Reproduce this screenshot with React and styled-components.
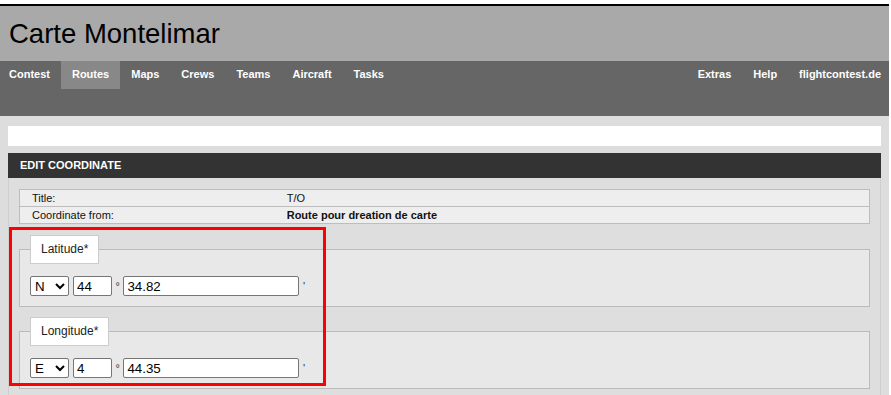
import styled, { createGlobalStyle } from 'styled-components';

const GlobalStyle = createGlobalStyle`
  body {
    margin: 0;
    background: #fff;
    font-family: 'Liberation Sans', Arial, sans-serif;
  }
`;

const Page = styled.div`
  position: relative;
  width: 889px;
  min-height: 389px;
  margin-top: 4px;
  border-top: 2px solid #000;
  background: #dddddd;
`;

const Banner = styled.header`
  box-sizing: border-box;
  height: 55px;
  padding: 12px 9px 0;
  background: #a9a9a9;
`;

const Title = styled.h1`
  margin: 0;
  font-size: 27.5px;
  font-weight: normal;
  line-height: 31px;
  color: #000;
`;

const Nav = styled.nav`
  display: flex;
  justify-content: space-between;
  align-items: flex-start;
  height: 55px;
  background: #666666;
`;

const NavGroup = styled.div`
  display: flex;
  margin-left: ${(p) => (p.$right ? 0 : '-2px')};
  margin-right: ${(p) => (p.$right ? '-3px' : 0)};
`;

const NavItem = styled.a`
  display: block;
  height: 28px;
  padding: 0 11px;
  line-height: 26px;
  font-size: 11px;
  font-weight: bold;
  color: #fff;
  text-decoration: none;
  background: ${(p) => (p.$active ? '#888888' : 'transparent')};
`;

const Content = styled.main`
  padding: 10px 8px 0;
`;

const MessageBar = styled.div`
  height: 20px;
  background: #fff;
`;

const Panel = styled.section`
  margin-top: 7px;
`;

const PanelHeader = styled.h2`
  margin: 0;
  height: 25px;
  padding: 0 12px;
  line-height: 25px;
  font-size: 11px;
  font-weight: bold;
  text-transform: uppercase;
  color: #fff;
  background: #333333;
`;

const PanelBody = styled.div`
  padding: 11px 10px 8px;
  border-left: 1px solid #cfcfcf;
  border-right: 1px solid #cfcfcf;
  background: #dedede;
`;

const InfoTable = styled.div`
  border: 1px solid #bdbdbd;
  border-bottom: none;
  background: #eeeeee;
  font-size: 11px;
  color: #111;
`;

const InfoRow = styled.div`
  display: grid;
  grid-template-columns: 30% 70%;
  height: 16px;
  line-height: 16px;
  border-bottom: 1px solid #bdbdbd;
`;

const InfoCell = styled.div`
  padding: 0 12px;
  font-weight: ${(p) => (p.$bold ? 'bold' : 'normal')};
`;

const Fieldset = styled.fieldset`
  margin: 11px 0 0;
  padding: 12px 10px 10px;
  border: 1px solid #bbbbbb;
  background: #e8e8e8;
  min-width: 0;

  & + & {
    margin-top: 10px;
  }
`;

const Legend = styled.legend`
  padding: 0 10px;
  border: 1px solid #cccccc;
  background: #fff;
  line-height: 27px;
  font-size: 12px;
  color: #222;
`;

const CoordRow = styled.div`
  display: flex;
  align-items: center;
  gap: 4px;
`;

const Select = styled.select`
  box-sizing: border-box;
  width: 39px;
  height: 20px;
  font-family: 'Liberation Sans', Arial, sans-serif;
  font-size: 13.33px;
  color: #000;
  background: #fff;
  border: 1px solid #767676;
  border-radius: 2px;
`;

const TextInput = styled.input`
  box-sizing: border-box;
  width: ${(p) => p.$width}px;
  height: 20px;
  padding: 1px 3px;
  font-family: 'Liberation Sans', Arial, sans-serif;
  font-size: 13.33px;
  color: #000;
  background: #fff;
  border: 1px solid #767676;
  border-radius: 2px;
`;

const Unit = styled.span`
  font-size: 11px;
  color: #333;
  margin: 0 -0.5px;
`;

const Highlight = styled.div`
  position: absolute;
  left: 9px;
  top: 221px;
  width: 317px;
  height: 159px;
  box-sizing: border-box;
  border: 3px solid #ff0000;
  pointer-events: none;
`;

function Coordinate({ label, hemi, options, deg, min }) {
  return (
    <Fieldset>
      <Legend>{label}*</Legend>
      <CoordRow>
        <Select defaultValue={hemi}>
          {options.map((o) => (
            <option key={o}>{o}</option>
          ))}
        </Select>
        <TextInput $width={39} defaultValue={deg} />
        <Unit>°</Unit>
        <TextInput $width={176} defaultValue={min} />
        <Unit>'</Unit>
      </CoordRow>
    </Fieldset>
  );
}

const leftNav = ['Contest', 'Routes', 'Maps', 'Crews', 'Teams', 'Aircraft', 'Tasks'];
const rightNav = ['Extras', 'Help', 'flightcontest.de'];

export default function App() {
  return (
    <>
      <GlobalStyle />
      <Page>
        <Banner>
          <Title>Carte Montelimar</Title>
        </Banner>
        <Nav>
          <NavGroup>
            {leftNav.map((n) => (
              <NavItem key={n} href="#" $active={n === 'Routes'}>
                {n}
              </NavItem>
            ))}
          </NavGroup>
          <NavGroup $right>
            {rightNav.map((n) => (
              <NavItem key={n} href="#">
                {n}
              </NavItem>
            ))}
          </NavGroup>
        </Nav>
        <Content>
          <MessageBar />
          <Panel>
            <PanelHeader>Edit coordinate</PanelHeader>
            <PanelBody>
              <InfoTable>
                <InfoRow>
                  <InfoCell>Title:</InfoCell>
                  <InfoCell>T/O</InfoCell>
                </InfoRow>
                <InfoRow>
                  <InfoCell>Coordinate from:</InfoCell>
                  <InfoCell $bold>Route pour dreation de carte</InfoCell>
                </InfoRow>
              </InfoTable>
              <Coordinate label="Latitude" hemi="N" options={['N', 'S']} deg="44" min="34.82" />
              <Coordinate label="Longitude" hemi="E" options={['E', 'W']} deg="4" min="44.35" />
            </PanelBody>
          </Panel>
        </Content>
        <Highlight />
      </Page>
    </>
  );
}
